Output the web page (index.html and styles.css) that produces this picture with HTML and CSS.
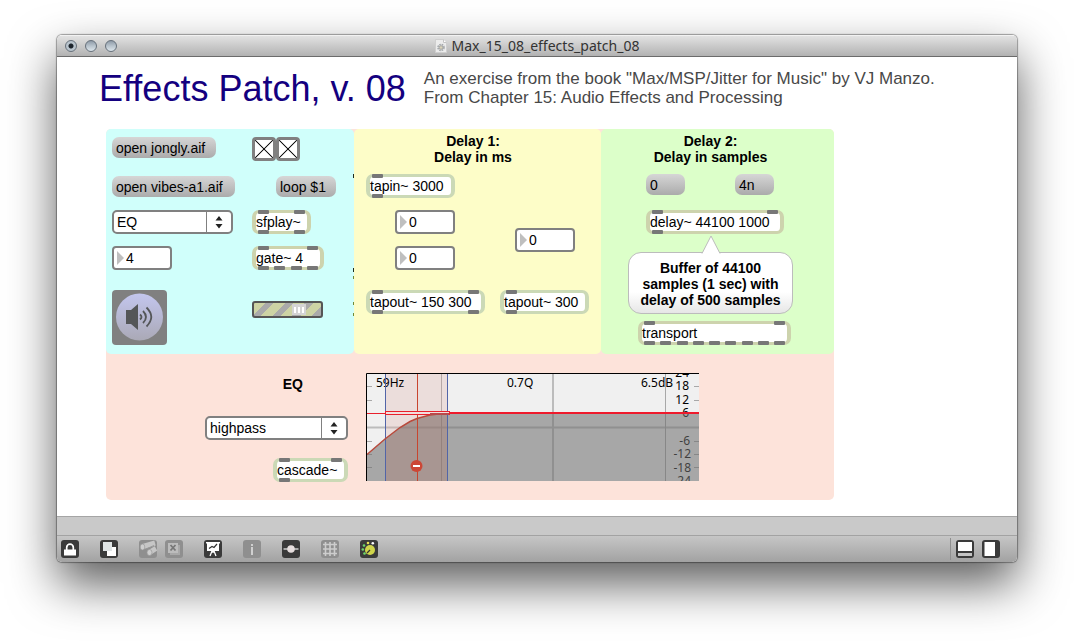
FILE: index.html
```html
<!DOCTYPE html>
<html lang="en">
<head>
<meta charset="utf-8">
<title>Max_15_08_effects_patch_08</title>
<link rel="stylesheet" href="styles.css">
</head>
<body>
<main class="window">
  <header class="titlebar">
    <div class="lights">
      <button class="light light-edited" aria-label="Close"></button>
      <button class="light" aria-label="Minimize"></button>
      <button class="light" aria-label="Zoom"></button>
    </div>
    <div class="doc">
      <svg class="doc-icon" width="12" height="14" viewBox="0 0 12 14" aria-hidden="true">
        <path d="M.5.5h8l3 3v10H.5z" fill="#ececec" stroke="#cfcfcf"/>
        <path d="M8.500.5v3h3" fill="#fff" stroke="#c4c4c4"/>
        <circle cx="6" cy="8.500" r="3" fill="none" stroke="#a5a9ac" stroke-width="1.600" stroke-dasharray="1.600 .8"/>
        <circle cx="6" cy="8.500" r="1.800" fill="#d9d3b8" stroke="#999" stroke-width=".8"/>
      </svg>
      <span>Max_15_08_effects_patch_08</span>
    </div>
  </header>

  <section class="canvas">
    <div class="intro">
      <h1>Effects Patch, v. 08</h1>
      <p>An exercise from the book "Max/MSP/Jitter for Music" by VJ Manzo.<br>From Chapter 15: Audio Effects and Processing</p>
    </div>

    <div class="patch">
      <section class="panel source">
        <button class="message wide-a">open jongly.aif</button>
        <div class="toggles">
          <input type="checkbox" class="toggle" aria-label="Play" checked>
          <input type="checkbox" class="toggle" aria-label="Loop" checked>
        </div>
        <button class="message wide-b">open vibes-a1.aif</button>
        <button class="message loop">loop $1</button>
        <div class="umenu umenu-s">
          <select aria-label="Effect"><option>EQ</option><option>Delay 1</option><option>Delay 2</option></select>
          <svg class="arrows" width="8" height="14" viewBox="0 0 8 14" aria-hidden="true"><path d="M.5 5.500 4 1l3.500 4.500zM.5 9h7L4 13.500z" fill="#222"/></svg>
        </div>
        <div class="object olive w59"><i class="ports top"><b></b><b></b></i>sfplay~<i class="ports bottom"><b></b><b></b></i></div>
        <div class="number">
          <svg width="7" height="14" viewBox="0 0 7 14" aria-hidden="true"><path d="M0 0l7 7-7 7z" fill="#bfbfbf"/></svg>
          <input type="text" value="4" aria-label="Gate outlet">
        </div>
        <div class="object olive w72"><i class="ports top"><b></b><b></b></i>gate~ 4<i class="ports bottom"><b></b><b></b><b></b><b></b></i></div>
        <button class="dac" aria-label="Audio on">
          <svg width="55" height="55" viewBox="0 0 55 55" aria-hidden="true">
            <defs><linearGradient id="dacfill" x2="0" y2="1"><stop stop-color="#c3c6ee"/><stop offset="1" stop-color="#aaa9b6"/></linearGradient></defs>
            <circle cx="27.500" cy="27" r="23.500" fill="url(#dacfill)"/>
            <path d="M14 20h5l7-6v26l-7-6h-5z" fill="#545658"/>
            <path d="M28 24.500q3 2.500 0 5M31 21q6 6 0 12M34.500 17.500q9.500 9.500 0 19" fill="none" stroke="#545658" stroke-width="1.800"/>
          </svg>
        </button>
        <input type="range" class="gain" min="0" max="100" value="72" aria-label="Gain">
      </section>

      <section class="panel delay-ms">
        <h2>Delay 1:<br>Delay in ms</h2>
        <div class="object green w89"><i class="ports top"><b></b></i>tapin~ 3000<i class="ports bottom"><b></b></i></div>
        <div class="taps">
          <div class="tap-pair">
            <div class="number">
              <svg width="7" height="14" viewBox="0 0 7 14" aria-hidden="true"><path d="M0 0l7 7-7 7z" fill="#bfbfbf"/></svg>
              <input type="text" value="0" aria-label="Left tap time">
            </div>
            <div class="number">
              <svg width="7" height="14" viewBox="0 0 7 14" aria-hidden="true"><path d="M0 0l7 7-7 7z" fill="#bfbfbf"/></svg>
              <input type="text" value="0" aria-label="Right tap time">
            </div>
          </div>
          <div class="number">
            <svg width="7" height="14" viewBox="0 0 7 14" aria-hidden="true"><path d="M0 0l7 7-7 7z" fill="#bfbfbf"/></svg>
            <input type="text" value="0" aria-label="Single tap time">
          </div>
        </div>
        <div class="outs">
          <div class="object green w119"><i class="ports top"><b></b><b></b></i>tapout~ 150 300<i class="ports bottom"><b></b><b></b></i></div>
          <div class="object green w89"><i class="ports top"><b></b></i>tapout~ 300<i class="ports bottom"><b></b></i></div>
        </div>
        <svg class="cords" width="1" height="150" viewBox="0 0 1 150" aria-hidden="true">
          <path d="M0 0h1v4H0zM0 94h1v4H0z" fill="#1d2b1d"/>
          <path d="M0 102h1v3H0zM0 128h1v3H0zM0 139h1v3H0z" fill="#6f8a35"/>
        </svg>
      </section>

      <section class="panel delay-samples">
        <h2>Delay 2:<br>Delay in samples</h2>
        <div class="presets">
          <button class="message short">0</button>
          <button class="message short">4n</button>
        </div>
        <div class="object olive w138"><i class="ports top"><b></b><b></b></i>delay~ 44100 1000<i class="ports bottom"><b></b></i></div>
        <div class="callout">
          <svg class="pointer" width="20" height="19" viewBox="0 0 20 19" aria-hidden="true"><path d="M1 18.500 10 1l9 17.500" fill="#fff" stroke="#bcbcbc"/></svg>
          Buffer of 44100<br>samples (1 sec) with<br>delay of 500 samples
        </div>
        <div class="object olive w153"><i class="ports top"><b></b><b></b></i>transport<i class="ports bottom"><b></b><b></b><b></b><b></b><b></b><b></b><b></b><b></b><b></b></i></div>
      </section>

      <section class="panel eq">
        <div class="eq-controls">
          <h2>EQ</h2>
          <div class="umenu umenu-l">
            <select aria-label="Filter type"><option>highpass</option><option>lowpass</option><option>bandpass</option></select>
            <svg class="arrows" width="8" height="14" viewBox="0 0 8 14" aria-hidden="true"><path d="M.5 5.500 4 1l3.500 4.500zM.5 9h7L4 13.500z" fill="#222"/></svg>
          </div>
          <div class="object green w75"><i class="ports top"><b></b><b></b></i>cascade~<i class="ports bottom"><b></b></i></div>
        </div>
        <svg class="graph" width="333" height="108" viewBox="0 0 333 108" role="img" aria-label="Filter response">
          <rect width="333" height="108" fill="#f0f0f0"/>
          <path d="M0 54.500h333M187 0v108" stroke="#bcbcbc" stroke-width="2"/>
          <path d="M75.500 0v108M299.500 0v108" stroke="#a8a8a8"/>
          <path d="M1 13.500h5M1 27.500h5M1 68.500h5M1 81.500h5M1 94.500h5M328 13.500h5M328 27.500h5M328 68.500h5M328 81.500h5M328 94.500h5" stroke="#a8a8a8"/>
          <rect x="19" y="1" width="63" height="107" fill="#dcaaa2" opacity=".27"/>
          <g class="graph-text">
            <text x="10" y="14">59Hz</text>
            <text x="141" y="14">0.7Q</text>
            <text x="275" y="14">6.5dB</text>
            <g text-anchor="end">
              <text x="323" y="4">24</text><text x="323" y="17">18</text><text x="323" y="31">12</text><text x="323" y="44">6</text>
              <text x="324" y="72">-6</text><text x="325" y="85">-12</text><text x="325" y="99">-18</text><text x="325" y="112">24</text>
            </g>
          </g>
          <path d="M1 81.500 19 66 34 54.500 44 48.500 51 45.500 64 42 77 40.500H333V108H1z" fill="#6e6e6e" opacity=".57"/>
          <path d="M19 66 34 54.500 44 48.500 51 45.500 64 42 77 40.500h5V108H19z" fill="#c86450" opacity=".13"/>
          <path d="M19.500 1v107M81.500 1v107" stroke="#5265a8"/>
          <path d="M51.500 1v107" stroke="#c8452f"/>
          <path d="M1 81.500 19 66 34 54.500 44 48.500 51 45.500 64 42 77 40.500" fill="none" stroke="#b94a3c" stroke-width="1.500"/>
          <path d="M1 40.500h18" stroke="#e8202c"/>
          <path d="M82 40h251" stroke="#ef1a2c" stroke-width="2"/>
          <rect x="19.500" y="38.500" width="64" height="3" fill="#f3dedd" stroke="#e8202c"/>
          <path d="M64 41h19" stroke="#b94a4a" stroke-width="2"/>
          <path d="M.5 108V.5H333" fill="none" stroke="#000"/>
          <circle cx="50.500" cy="93" r="6" fill="#cc4736"/>
          <path d="M47 93h7" stroke="#fff" stroke-width="2"/>
        </svg>
      </section>
    </div>
  </section>

  <div class="status"></div>
  <footer class="toolbar">
    <button class="tool" aria-label="Lock">
      <svg width="18" height="18" viewBox="0 0 18 18"><path d="M3 9.500h12v6H3z" fill="#fff"/><path d="M5.700 10V7.500a3.300 3.300 0 0 1 6.600 0V10" fill="none" stroke="#fff" stroke-width="1.700"/></svg>
    </button>
    <button class="tool" aria-label="Presentation layers">
      <svg width="18" height="18" viewBox="0 0 18 18"><path d="M7 7h9v9H7z" fill="#fff"/><path d="M3 2h9v9H3z" fill="#dfe4e5"/></svg>
    </button>
    <div class="tool-pair">
      <button class="tool off" aria-label="Patch cords" disabled>
        <svg width="18" height="18" viewBox="0 0 18 18"><path d="M4 6.500 16 3M10.500 12.500 17 8.500" stroke="#c6c6c6" stroke-width="5"/><ellipse cx="3.500" cy="7" rx="2.300" ry="3" fill="#cecece" stroke="#999" stroke-width=".7"/><ellipse cx="10.500" cy="12.500" rx="2.500" ry="3" fill="#cecece" stroke="#999" stroke-width=".7"/><path d="m7 9 8-3.500" stroke="#999"/></svg>
      </button>
      <button class="tool off" aria-label="Clear" disabled>
        <svg width="18" height="18" viewBox="0 0 18 18"><path d="M5 5h10v10H5z" fill="#a8a8a8"/><path d="M3 3h10v10H3z" fill="#bcbcbc"/><path d="m5.500 5 5 5.500m0-5.500-5 5.500" stroke="#777" stroke-width="1.800"/></svg>
      </button>
    </div>
    <button class="tool" aria-label="Presentation mode">
      <svg width="18" height="18" viewBox="0 0 18 18"><path d="M2 2h14v1.500h-1V11H3V3.500H2z" fill="#fff"/><path d="m5 8.500 3-2 2 1 3-3.500" fill="none" stroke="#333" stroke-width="1.200"/><path d="m8 11-2 5m4-5 2 5M9 11v2" stroke="#fff" stroke-width="1.300"/></svg>
    </button>
    <button class="tool off" aria-label="Inspector" disabled>
      <svg width="18" height="18" viewBox="0 0 18 18"><path d="M8 4h2v2H8zM8 7h2v8H8z" fill="#d0d0d0"/></svg>
    </button>
    <button class="tool" aria-label="New object">
      <svg width="18" height="18" viewBox="0 0 18 18"><path d="M1.500 9h15" stroke="#cfcfcf" stroke-width="1.500"/><circle cx="9" cy="9" r="3.800" fill="#e6dede"/></svg>
    </button>
    <button class="tool off" aria-label="Grid" disabled>
      <svg width="18" height="18" viewBox="0 0 18 18"><path d="M4.500 2v14M9 2v14M13.500 2v14M2 4.500h14M2 9h14M2 13.500h14" stroke="#cdcdcd" stroke-width="1.600"/></svg>
    </button>
    <button class="tool" aria-label="Audio parameters">
      <svg width="18" height="18" viewBox="0 0 18 18"><circle cx="10" cy="10" r="5" fill="#d0d54a"/><path d="m10 10-3 3" stroke="#333" stroke-width="1.300"/><g fill="#6fd86a"><circle cx="4.500" cy="13.500" r="1.300"/><circle cx="2.800" cy="9.500" r="1.300"/><circle cx="4" cy="5.500" r="1.300"/></g><circle cx="8" cy="3" r="1.300" fill="#e6e055"/><circle cx="12.800" cy="3.200" r="1.300" fill="#fff"/></svg>
    </button>
    <div class="views">
      <button class="tool" aria-label="Bottom pane">
        <svg width="18" height="18" viewBox="0 0 18 18"><path d="M2 2h14v9H2z" fill="#fff"/><path d="M2 13h14v3H2z" fill="#c4c4c4"/></svg>
      </button>
      <button class="tool" aria-label="Side pane">
        <svg width="18" height="18" viewBox="0 0 18 18"><path d="M2.500 2H13v14H2.500z" fill="#fff"/></svg>
      </button>
    </div>
  </footer>
</main>
</body>
</html>
```

FILE: styles.css
```css
* { box-sizing: border-box; }

body {
  margin: 0;
  min-height: 100vh;
  padding: 35px 57px 79px;
  display: flex;
  background: #fff;
  color: #000;
  font: 14px/16px "Liberation Sans", Arial, sans-serif;
}

h1, h2, p { margin: 0; }
button, input, select { font: inherit; color: inherit; margin: 0; }
button { border: 0; padding: 0; }

.window {
  flex: 1;
  display: flex;
  flex-direction: column;
  border-radius: 5px;
  overflow: hidden;
  background: #fff;
  box-shadow: 0 0 1px 1px rgba(0, 0, 0, .35), 0 22px 48px rgba(0, 0, 0, .64);
}

/* Title bar */
.titlebar {
  display: grid;
  grid-template-columns: 1fr auto 1fr;
  align-items: center;
  height: 22px;
  padding: 0 8px;
  border-top: 1px solid #f2f2f2;
  border-bottom: 1px solid #6b6b6b;
  background: linear-gradient(#e2e2e2, #b2b2b2);
}
.lights { display: flex; gap: 8px; }
.light {
  width: 12px;
  height: 12px;
  border: 1px solid #66707a;
  border-radius: 50%;
  background: linear-gradient(#8f9ba8, #b9c4cd 50%, #dde6ec);
}
.light-edited { background: radial-gradient(circle, #1c242c 1px, #1c242c 2px, #b9c4cd 3px); }
.doc {
  display: flex;
  align-items: center;
  gap: 5px;
  color: #333;
  font: 14px/18px "Noto Sans", "Open Sans", sans-serif;
}

/* Patcher canvas */
.canvas { flex: 1; padding-bottom: 16px; }
.intro {
  display: flex;
  align-items: flex-start;
  gap: 18px;
  height: 72px;
  padding: 12px 0 0 42px;
}
.intro h1 {
  color: #14007f;
  font-size: 36px;
  font-weight: 400;
  line-height: 40px;
  white-space: nowrap;
}
.intro p {
  color: #484848;
  font-size: 17px;
  line-height: 19px;
  white-space: nowrap;
}

.patch {
  display: grid;
  grid-template-columns: 248px 247px 233px;
  width: max-content;
  margin-left: 49px;
  border-radius: 5px;
  background: #fde3da;
}
.panel { border-radius: 5px; min-height: 225px; }
.panel h2 { font-size: 14px; line-height: 16px; text-align: center; }

.source {
  display: grid;
  grid-template-columns: 140px 1fr;
  grid-template-rows: 39px 34px 36px 44px 55px;
  align-items: start;
  justify-items: start;
  padding: 8px 6px;
  background: #d0fffb;
}
.delay-ms {
  position: relative;
  padding: 4px 0 0 12px;
  background: #fdfdc8;
}
.delay-ms h2 { margin: 0 21px 9px 0; }
.delay-samples {
  padding: 4px 41px 0 27px;
  background: #dcffc9;
}
.delay-samples h2 { margin-bottom: 9px; }
.eq {
  grid-column: 1 / -1;
  display: flex;
  gap: 18px;
  min-height: 146px;
  padding-top: 19px;
}

/* Message boxes */
.message {
  height: 21px;
  padding: 0 4px;
  border-radius: 7px;
  background: linear-gradient(#d6d6d6, #ababab);
  text-align: left;
  white-space: nowrap;
}
.wide-a { width: 104px; }
.wide-b { width: 123px; }
.loop { width: 60px; margin-left: 24px; }
.short { width: 39px; }
.presets { display: flex; gap: 50px; margin: 0 0 15px 18px; }

/* Toggles */
.toggles { display: flex; }
.toggle {
  appearance: none;
  width: 24px;
  height: 24px;
  border: 3px solid #808080;
  border-radius: 4px;
  background: #fff;
}
.toggle:checked {
  background:
    linear-gradient(45deg, transparent 47%, #111 48%, #111 52%, transparent 53%) no-repeat,
    linear-gradient(-45deg, transparent 47%, #111 48%, #111 52%, transparent 53%) no-repeat,
    #fff;
}

/* Objects */
.object {
  position: relative;
  height: 24px;
  border: solid #cfd8b6;
  border-width: 3px 4px;
  border-radius: 7px;
  background: #fff;
  line-height: 18px;
  white-space: nowrap;
}
.olive { border-color: #cdd3ad; }
.green { border-color: #cbd9b6; }
.w59 { width: 59px; }
.w72 { width: 72px; }
.w75 { width: 75px; }
.w89 { width: 89px; }
.w119 { width: 119px; }
.w138 { width: 138px; }
.w153 { width: 153px; }
.ports {
  position: absolute;
  left: 2px;
  right: 2px;
  display: flex;
  justify-content: space-between;
}
.ports.top { top: -3px; }
.ports.bottom { bottom: -3px; }
.ports b {
  width: 11px;
  height: 4px;
  border-radius: 1px;
  background: #777;
}

/* Number boxes */
.number {
  display: flex;
  align-items: center;
  gap: 2px;
  width: 60px;
  height: 24px;
  padding-left: 3px;
  border: 2px solid #808080;
  border-radius: 4px;
  background: #fff;
}
.number input {
  flex: 1;
  min-width: 0;
  padding: 0;
  border: 0;
  background: none;
}
.taps {
  display: flex;
  align-items: center;
  gap: 60px;
  margin: 12px 0 20px 29px;
}
.tap-pair { display: flex; flex-direction: column; gap: 12px; }
.outs { display: flex; gap: 15px; }

/* Menus */
.umenu {
  position: relative;
  height: 24px;
  border: 2px solid #808080;
  border-radius: 5px;
  background: linear-gradient(#808080, #808080) right 24px top / 1px 100% no-repeat #fff;
}
.umenu-s { width: 121px; }
.umenu-l { width: 143px; }
.umenu select {
  appearance: none;
  width: 100%;
  height: 20px;
  padding: 0 0 0 3px;
  border: 0;
  background: none;
}
.arrows {
  position: absolute;
  right: 8px;
  top: 3px;
  pointer-events: none;
}

/* Audio switch and gain slider */
.dac {
  width: 55px;
  height: 55px;
  border-radius: 4px;
  background: #808080;
}
.dac svg { display: block; }
.gain {
  appearance: none;
  width: 71px;
  height: 17px;
  margin-top: 11px;
  border: 2px solid #555;
  border-radius: 3px;
  background: repeating-linear-gradient(135deg, #cdd3a4 0 8px, #aaa 8px 14px);
}
.gain::-webkit-slider-thumb {
  appearance: none;
  width: 14px;
  height: 11px;
  background:
    linear-gradient(90deg, transparent 2px, #fff 2px 4px, transparent 4px 6px, #fff 6px 8px, transparent 8px 10px, #fff 10px 12px, transparent 12px) center / 14px 6px no-repeat #d4d4d4;
}

/* Loose cord ends showing between two panels */
.cords { position: absolute; left: -1px; top: 45px; }

.delay-samples .w138 { margin-left: 18px; }
.delay-samples .w153 { margin-left: 10px; }
.callout {
  position: relative;
  margin: 18px 0 7px;
  padding: 7px 0 5px;
  border: 1px solid #bcbcbc;
  border-radius: 13px;
  background: linear-gradient(#fff 65%, #e6e6e6);
  font-weight: 700;
  text-align: center;
  white-space: nowrap;
}
.pointer { position: absolute; left: 72px; top: -18px; }

/* Filter section */
.eq-controls {
  display: flex;
  flex-direction: column;
  align-items: flex-end;
  width: 242px;
}
.eq-controls h2 { margin: 3px 45px 24px 0; }
.eq-controls .umenu { margin-bottom: 18px; }
.graph { display: block; overflow: hidden; }
.graph-text { font: 12px "Noto Sans", "Open Sans", sans-serif; }

/* Bottom bars */
.status {
  height: 19px;
  border-top: 1px solid #a5a5a5;
  background: #c9c9c9;
}
.toolbar {
  display: flex;
  align-items: center;
  gap: 21px;
  height: 27px;
  padding: 0 17px 0 4px;
  border-top: 1px solid #a3a3a3;
  background: linear-gradient(#c6c6c6, #a2a2a2);
}
.tool-pair { display: flex; gap: 8px; }
.tool {
  width: 18px;
  height: 18px;
  border-radius: 3px;
  background: #3a3a3a;
}
.tool.off { background: #8f8f8f; }
.tool svg { display: block; }
.views {
  display: flex;
  gap: 8px;
  margin-left: auto;
  padding: 2px 0 2px 5px;
  border-left: 1px solid #8f8f8f;
}
```
